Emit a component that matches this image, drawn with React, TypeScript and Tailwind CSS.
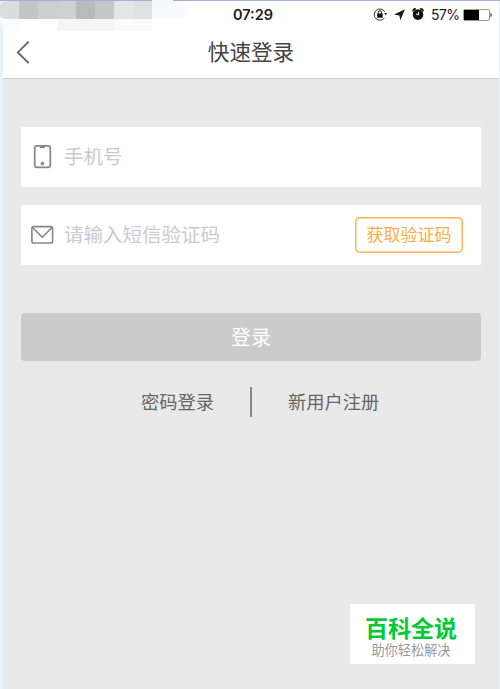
import React, { useState } from 'react';

const StatusBar = () => (
  <div className="relative flex h-[27px] items-center">
    {/* blurred carrier name */}
    <div className="absolute top-0 -left-[3px] h-[30px] w-[186px]">
      <div className="flex h-[18px] overflow-hidden rounded-l-[9px] rounded-r-[14px]">
        <span className="w-[19px] bg-[#dbdcdc]" />
        <span className="w-[19px] bg-[#c4c5c7]" />
        <span className="w-[19px] bg-[#cdcecf]" />
        <span className="w-[19px] bg-[#cfd0d0]" />
        <span className="w-[19px] bg-[#b9babc]" />
        <span className="w-[19px] bg-[#c6c7c9]" />
        <span className="w-[19px] bg-[#e3e5e7]" />
        <span className="w-[19px] bg-[#dfe1e3]" />
        <span className="w-[34px] bg-[#f7f9fc]" />
      </div>
      <div className="flex h-3">
        <span className="w-[19px] rounded-bl-[12px] bg-[#fafdff]" />
        <span className="w-[38px]" />
        <span className="w-[57px] bg-[#f5f5f5]" />
        <span className="w-[38px] bg-[#fafafa]" />
      </div>
    </div>

    <span className="flex-1" />
    <span className="ml-[10px] w-[48px] pt-0.5 text-center font-['Inter',sans-serif] text-[14.5px] leading-none font-semibold text-[#1c1c1c]">
      07:29
    </span>
    <div className="flex flex-1 items-center justify-end pr-[6px]">
      <svg className="mr-[7px] h-[14px] w-[14px]" viewBox="0 0 14 14" fill="none">
        <path d="M11.7 3.8A5.6 5.6 0 1 0 11.4 9.9" stroke="#333" strokeWidth="1" />
        <path d="M11.3 5H14L12.7 7.5Z" fill="#222" />
        <rect x="4.1" y="5.6" width="5.6" height="4.2" rx="0.4" fill="#111" />
        <path d="M5.2 6V4.5a1.7 1.7 0 0 1 3.4 0v1.5" stroke="#111" strokeWidth="1" />
      </svg>
      <svg className="mr-[7px] h-[12px] w-[11px]" viewBox="0 0 11 12">
        <path d="M10.9 0.3L6.4 11.2L5.3 6.6L0.1 5.6Z" fill="#1a1a1a" />
      </svg>
      <svg className="mr-[7px] h-[13px] w-[12px]" viewBox="0 0 12 13" fill="none">
        <circle cx="6" cy="6.6" r="5.3" fill="#111" />
        <path d="M1.2 3.4a2 2 0 0 1 2.6-2.3M8.2 1.1a2 2 0 0 1 2.6 2.3" stroke="#111" strokeWidth="1.8" />
        <path d="M6.4 3.8V7L4 6" stroke="#fff" strokeWidth="1" />
      </svg>
      <span className="mr-[4px] w-[28px] text-right font-['Inter',sans-serif] text-[14px] leading-none tracking-[-0.6px] text-[#222]">
        57%
      </span>
      <svg className="h-[12px] w-[30px]" viewBox="0 0 30 12" fill="none">
        <rect x="0.5" y="0.5" width="26" height="11" rx="1.5" stroke="#999" />
        <rect x="1" y="1" width="15" height="10" fill="#000" />
        <path d="M27.4 3.8c1.8.6 1.8 3.8 0 4.4Z" fill="#444" />
      </svg>
    </div>
  </div>
);

const PhoneIcon = () => (
  <svg className="h-6 w-6" viewBox="0 0 24 24" fill="none" stroke="#85858e" strokeWidth="1.7">
    <rect x="4.7" y="0.9" width="15.6" height="21.4" rx="2.4" />
    <path d="M9.9 2.2h5" strokeWidth="1.8" />
    <circle cx="12.4" cy="18.6" r="1.4" fill="#85858e" strokeWidth="1" />
  </svg>
);

const MailIcon = () => (
  <svg className="h-6 w-6" viewBox="0 0 24 24" fill="none" stroke="#85858e" strokeWidth="1.6" strokeLinejoin="round">
    <rect x="1.9" y="3.6" width="20.7" height="16.4" rx="1.8" />
    <path d="M2.8 4.8L12.3 14.3L21.8 4.8" />
  </svg>
);

export default function App() {
  const [phone, setPhone] = useState('');
  const [code, setCode] = useState('');

  const handleLogin = (e: React.FormEvent) => {
    e.preventDefault();
  };

  const inputClass =
    "ml-2.5 h-full min-w-0 flex-1 bg-transparent text-[19.5px] text-[#444] placeholder:text-[#cacad0] focus:outline-none";

  return (
    <div className="relative flex h-[689px] w-[500px] flex-col overflow-hidden bg-[#ebf1fb] pr-px pl-[3px] font-['Liberation_Sans','Noto_Sans_CJK_SC',sans-serif]">
      <div className="-ml-[3px] flex h-px w-[500px] shrink-0 bg-[#a2b1ce]">
        <span className="ml-[152px] w-[21px] bg-[#f4f7fc]" />
      </div>

      <header className="h-[78px] shrink-0 border-b border-[#cfcfcf] bg-white">
        <StatusBar />
        <div className="grid h-[50px] grid-cols-[60px_1fr_60px] items-center">
          <button type="button" aria-label="返回" className="pl-[13px]">
            <svg className="h-6 w-[14px]" viewBox="0 0 14 24" fill="none">
              <path d="M12.7 0.6L1.8 11.4L12.7 22.2" stroke="#606060" strokeWidth="1.8" />
            </svg>
          </button>
          <h1 className="text-center text-[21.6px] leading-none text-[#444]">快速登录</h1>
        </div>
      </header>

      <main className="flex-1 bg-[#e9e9e9] px-[18px] pt-12">
        <form onSubmit={handleLogin}>
          <div className="flex h-[60px] items-center bg-white pl-[9px]">
            <PhoneIcon />
            <input
              type="tel"
              value={phone}
              onChange={(e) => setPhone(e.target.value)}
              placeholder="手机号"
              className={inputClass}
            />
          </div>

          <div className="mt-[18px] flex h-[60px] items-center bg-white pr-[18px] pl-[9px]">
            <MailIcon />
            <input
              type="text"
              value={code}
              onChange={(e) => setCode(e.target.value)}
              placeholder="请输入短信验证码"
              className={inputClass}
            />
            <button
              type="button"
              className="h-9 w-[108px] rounded-[5px] text-[17px] leading-none text-[#ffad42] shadow-[inset_0_0_0_1.5px_#ffb453]"
            >
              获取验证码
            </button>
          </div>

          <button type="submit" className="mt-12 h-12 w-full rounded bg-[#cbcbcb] pt-px text-[20px] leading-none text-white">
            登录
          </button>
        </form>

        <div className="mt-[26px] flex h-[30px] items-center text-[18.3px] leading-none text-[#666]">
          <a href="#" className="w-[229px] pt-[3px] pr-9 text-right">密码登录</a>
          <span className="h-[30px] w-[2px] bg-[#888]" />
          <a href="#" className="pt-[3px] pl-9">新用户注册</a>
        </div>
      </main>

      <div className="absolute top-[604px] left-[350px] flex h-[60px] w-[125px] flex-col items-center bg-white pt-[13px] pr-[3px]">
        <span className="text-[23px] leading-6 font-bold text-[#00cb33]">百科全说</span>
        <span className="mt-[3px] text-[13.2px] leading-[14px] text-[#999]">助你轻松解决</span>
      </div>
    </div>
  );
}
